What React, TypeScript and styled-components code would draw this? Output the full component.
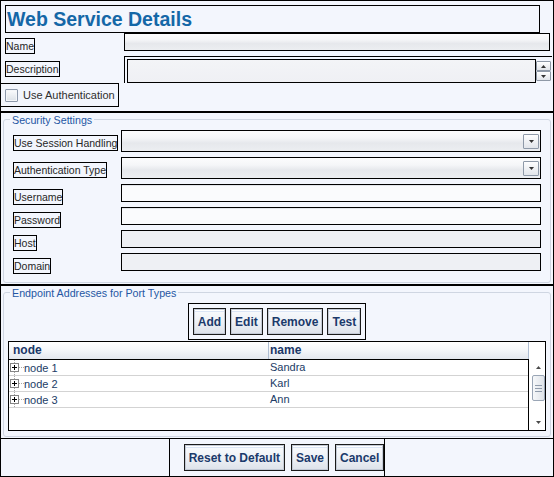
import React from 'react';
import styled, { createGlobalStyle } from 'styled-components';

const FONT = '"Liberation Sans", Arial, sans-serif';

const GlobalStyle = createGlobalStyle`
  html, body { margin: 0; padding: 0; background: #ffffff; }
  body { font-family: ${FONT}; }
  *, *::before, *::after { box-sizing: border-box; }
`;

const Page = styled.div`
  width: 554px;
  height: 477px;
  border: 1px solid #000;
  background: #f3f6fd;
  display: flex;
  flex-direction: column;
  overflow: hidden;
  color: #2a2a2a;
  font-family: ${FONT};
`;

const HeaderSection = styled.section`
  display: flex;
  flex-direction: column;
  align-items: flex-start;
  padding: 4px 0 4px 4px;
  border-bottom: 1px solid #000;
`;

const TitleBox = styled.h1`
  margin: 0;
  width: 535px;
  height: 28px;
  border: 1px solid #000;
  padding-left: 1px;
  font-family: ${FONT};
  font-weight: bold;
  font-size: 19.5px;
  line-height: 26px;
  color: #1467a7;
`;

const Row = styled.div<{ $h: number; $mt?: number }>`
  display: flex;
  align-items: flex-start;
  height: ${(p) => p.$h}px;
  margin-top: ${(p) => p.$mt ?? 0}px;
`;

const LabelCell = styled.div<{ $w: number }>`
  width: ${(p) => p.$w}px;
  flex: none;
`;

const Label = styled.span`
  display: inline-block;
  margin-top: 5px;
  border: 1px solid #000;
  font-size: 10.5px;
  line-height: 14px;
  color: #262626;
  white-space: nowrap;
`;

type Tone = 'gloss' | 'white' | 'gray';
const toneBg: Record<Tone, string> = {
  gloss: 'linear-gradient(to bottom, #fcfcfd 0%, #f5f6f8 35%, #e6e8ec 60%, #eceef1 100%)',
  white: '#fafbfd',
  gray: '#eef0f4',
};

const Field = styled.input<{ $w: number; $h: number; $tone: Tone }>`
  display: block;
  width: ${(p) => p.$w}px;
  height: ${(p) => p.$h}px;
  margin: 0;
  padding: 0 3px;
  border: 1px solid #000;
  border-radius: 0;
  outline: none;
  background: ${(p) => toneBg[p.$tone]};
  box-shadow: ${(p) => (p.$tone === 'white' ? 'inset 0 1px 0 #e2e5ea' : 'none')};
  font-family: ${FONT};
  font-size: 11px;
`;

const DescFrame = styled.div`
  width: 428px;
  height: 27px;
  display: flex;
  border-top: 1px solid #000;
  border-left: 1px solid #000;
  padding: 2px 1px 0 2px;
`;

const DescArea = styled.textarea`
  flex: 1;
  height: 24px;
  margin: 0;
  padding: 0;
  resize: none;
  border: 1px solid #000;
  border-radius: 0;
  outline: none;
  background: linear-gradient(to bottom, #f3f4f7, #eff0f4);
`;

const Spinner = styled.div`
  width: 15px;
  margin-top: 2px;
  display: flex;
  flex-direction: column;
`;

const SpinBtn = styled.div`
  width: 15px;
  height: 10px;
  border: 1px solid #8e98a6;
  border-radius: 1px;
  background: linear-gradient(to bottom, #ffffff, #e1e4e9);
  display: flex;
  align-items: center;
  justify-content: center;
`;

const Tri = ({ up, color = '#333' }: { up?: boolean; color?: string }) => (
  <svg width="5" height="3" viewBox="0 0 5 3">
    <path d={up ? 'M0 3 L2.5 0 L5 3 Z' : 'M0 0 L5 0 L2.5 3 Z'} fill={color} />
  </svg>
);

const AuthBox = styled.label`
  margin-left: -5px;
  width: 119px;
  height: 24px;
  border: 1px solid #000;
  padding-left: 4px;
  display: flex;
  align-items: center;
  gap: 5px;
`;

const CheckBox = styled.span`
  width: 13px;
  height: 13px;
  flex: none;
  border: 1px solid #8d99ab;
  border-radius: 1px;
  background: linear-gradient(to bottom, #fbfcfd, #dce1e8);
  box-shadow: inset 0 0 0 1px #f4f6f9;
`;

const AuthText = styled.span`
  font-size: 11px;
  line-height: 14px;
  color: #2e2e2e;
  white-space: nowrap;
`;

const Section = styled.section<{ $top?: boolean; $bottom?: boolean }>`
  border-top: ${(p) => (p.$top ? '1px solid #000' : 'none')};
  border-bottom: ${(p) => (p.$bottom ? '1px solid #000' : 'none')};
  padding: 0 2px 1px 2px;
`;

const Fieldset = styled.fieldset<{ $pad: string }>`
  margin: 0;
  min-width: 0;
  padding: ${(p) => p.$pad};
  border: 1px solid #cfd6e2;
  border-radius: 3px;
`;

const Legend = styled.legend<{ $ml: number }>`
  margin-left: ${(p) => p.$ml}px;
  padding: 2px 2px 0 2px;
  font-size: 10.7px;
  line-height: 11px;
  color: #2556a3;
  white-space: nowrap;
`;

const Stack = styled.div<{ $gap: number; $center?: boolean }>`
  display: flex;
  flex-direction: column;
  gap: ${(p) => p.$gap}px;
  align-items: ${(p) => (p.$center ? 'center' : 'stretch')};
`;

const SelectBox = styled.div<{ $w: number }>`
  width: ${(p) => p.$w}px;
  height: 22px;
  border: 1px solid #000;
  background: ${toneBg.gloss};
  display: flex;
  align-items: center;
  justify-content: flex-end;
  padding-right: 1px;
`;

const DropBtn = styled.div`
  width: 16px;
  height: 15px;
  border: 1px solid #8e99a8;
  border-radius: 1px;
  background: linear-gradient(to bottom, #fdfdfe, #e2e5ea);
  display: flex;
  align-items: center;
  justify-content: center;
`;

const ButtonGroup = styled.div<{ $gap: number; $pad: string; $full?: boolean }>`
  display: flex;
  gap: ${(p) => p.$gap}px;
  padding: ${(p) => p.$pad};
  border: 1px solid #000;
  ${(p) => (p.$full ? 'border-top: none; border-bottom: none; height: 100%;' : '')}
  align-items: flex-start;
`;

const Btn = styled.button`
  height: 27px;
  margin: 0;
  padding: 0 4px;
  border: 1px solid #1a1a1a;
  border-radius: 0;
  background: linear-gradient(
    to bottom,
    #ffffff 0px,
    #ffffff 2px,
    #dbe5f5 2px,
    #dbe5f5 3px,
    #f7f9fc 3px,
    #eef1f6 50%,
    #dde2ea 100%
  );
  box-shadow: inset 0 0 0 1px #c3cad6;
  font-family: ${FONT};
  font-weight: bold;
  font-size: 12px;
  color: #1b3a6b;
  white-space: nowrap;
  cursor: pointer;
`;

const ButtonBar = styled.div`
  flex: 1;
  display: flex;
  justify-content: center;
`;

const Table = styled.div`
  margin-top: 1px;
  align-self: stretch;
  height: 90px;
  border: 1px solid #000;
  background: #ffffff;
  display: grid;
  grid-template-columns: 1fr 16px;
  grid-template-rows: 17px 1fr;
`;

const HeadRow = styled.div`
  display: grid;
  grid-template-columns: 260px 1fr;
  background: linear-gradient(to bottom, #ffffff 0%, #f5f7fa 45%, #e3e7ee 100%);
`;

const HeadCell = styled.div<{ $pl: number }>`
  border-right: 1px solid #aebdd2;
  padding-left: ${(p) => p.$pl}px;
  font-weight: bold;
  font-size: 12px;
  line-height: 17px;
  color: #1a3768;
`;

const HeadSpacer = styled.div`
  background: #ffffff;
`;

const Body = styled.div`
  border-top: 1px solid #000;
  border-right: 1px solid #000;
  overflow: hidden;
`;

const BodyRow = styled.div`
  display: grid;
  grid-template-columns: 260px 1fr;
  height: 16px;
  border-bottom: 1px solid #d3d3d3;
  font-size: 11px;
  line-height: 15px;
  color: #213c66;
`;

const NodeCell = styled.div`
  display: flex;
  align-items: center;
  padding-left: 1px;
  white-space: nowrap;
`;

const NameCell = styled.div`
  padding-left: 1px;
  white-space: nowrap;
`;

const ScrollBar = styled.div`
  display: flex;
  flex-direction: column;
  align-items: center;
  background: #ffffff;
`;

const ArrowZone = styled.div`
  height: 16px;
  width: 16px;
  display: flex;
  align-items: center;
  justify-content: center;
  padding-left: 2px;
`;

const Thumb = styled.div`
  width: 13px;
  height: 26px;
  margin-left: 2px;
  border: 1px solid #9aa6b6;
  border-radius: 2px;
  background: linear-gradient(to right, #f6f8fa, #dfe3e9);
  display: flex;
  flex-direction: column;
  align-items: center;
  justify-content: center;
  gap: 2px;
`;

const Grip = styled.span`
  width: 7px;
  height: 1px;
  background: #8f9bab;
`;

const Spacer = styled.div`
  flex: 1;
`;

const TreeIcon = () => (
  <svg width="14" height="16" viewBox="0 0 14 16" style={{ flex: 'none' }}>
    <line x1="4.5" y1="0" x2="4.5" y2="16" stroke="#a8a8a8" strokeDasharray="1 1" />
    <rect x="0.5" y="3.5" width="8" height="8" fill="#ffffff" stroke="#858585" />
    <path d="M2 7.5h5M4.5 5v5" stroke="#000" />
    <line x1="9" y1="7.5" x2="14" y2="7.5" stroke="#a8a8a8" strokeDasharray="1 1" />
  </svg>
);

const rows = [
  { node: 'node 1', name: 'Sandra' },
  { node: 'node 2', name: 'Karl' },
  { node: 'node 3', name: 'Ann' },
];

const securityFields: { label: string; kind: 'select' | Tone }[] = [
  { label: 'Use Session Handling', kind: 'select' },
  { label: 'Authentication Type', kind: 'select' },
  { label: 'Username', kind: 'white' },
  { label: 'Password', kind: 'white' },
  { label: 'Host', kind: 'gray' },
  { label: 'Domain', kind: 'gray' },
];

export default function App() {
  return (
    <>
      <GlobalStyle />
      <Page>
        <HeaderSection>
          <TitleBox>Web Service Details</TitleBox>
          <Row $h={18}>
            <LabelCell $w={119}>
              <Label>Name</Label>
            </LabelCell>
            <Field readOnly $w={426} $h={18} $tone="gloss" />
          </Row>
          <Row $h={27} $mt={5}>
            <LabelCell $w={119}>
              <Label>Description</Label>
            </LabelCell>
            <DescFrame>
              <DescArea readOnly />
              <Spinner>
                <SpinBtn>
                  <Tri up />
                </SpinBtn>
                <SpinBtn>
                  <Tri />
                </SpinBtn>
              </Spinner>
            </DescFrame>
          </Row>
          <AuthBox>
            <CheckBox />
            <AuthText>Use Authentication</AuthText>
          </AuthBox>
        </HeaderSection>

        <Section $top $bottom>
          <Fieldset $pad="4px 9px 11px 9px">
            <Legend $ml={-3}>Security Settings</Legend>
            <Stack $gap={5}>
              {securityFields.map((f) => (
                <Row key={f.label} $h={f.kind === 'select' ? 22 : 18}>
                  <LabelCell $w={108}>
                    <Label>{f.label}</Label>
                  </LabelCell>
                  {f.kind === 'select' ? (
                    <SelectBox $w={420}>
                      <DropBtn>
                        <Tri />
                      </DropBtn>
                    </SelectBox>
                  ) : (
                    <Field
                      readOnly
                      type={f.label === 'Password' ? 'password' : 'text'}
                      $w={420}
                      $h={18}
                      $tone={f.kind}
                    />
                  )}
                </Row>
              ))}
            </Stack>
          </Fieldset>
        </Section>

        <Section $top $bottom>
          <Fieldset $pad="4px 4px 5px 4px">
            <Legend $ml={2}>Endpoint Addresses for Port Types</Legend>
            <Stack $gap={0} $center>
              <ButtonGroup $gap={4} $pad="4px 4px 4px 4px">
                <Btn>Add</Btn>
                <Btn>Edit</Btn>
                <Btn>Remove</Btn>
                <Btn>Test</Btn>
              </ButtonGroup>
              <Table>
                <HeadRow>
                  <HeadCell $pl={4}>node</HeadCell>
                  <HeadCell $pl={1}>name</HeadCell>
                </HeadRow>
                <HeadSpacer />
                <Body>
                  {rows.map((r) => (
                    <BodyRow key={r.node}>
                      <NodeCell>
                        <TreeIcon />
                        {r.node}
                      </NodeCell>
                      <NameCell>{r.name}</NameCell>
                    </BodyRow>
                  ))}
                </Body>
                <ScrollBar>
                  <ArrowZone>
                    <Tri up color="#4a4a4a" />
                  </ArrowZone>
                  <Thumb>
                    <Grip />
                    <Grip />
                    <Grip />
                  </Thumb>
                  <Spacer />
                  <ArrowZone>
                    <Tri color="#4a4a4a" />
                  </ArrowZone>
                </ScrollBar>
              </Table>
            </Stack>
          </Fieldset>
        </Section>

        <ButtonBar>
          <ButtonGroup $gap={6} $pad="5px 0 0 14px" $full>
            <Btn>Reset to Default</Btn>
            <Btn>Save</Btn>
            <Btn>Cancel</Btn>
          </ButtonGroup>
        </ButtonBar>
      </Page>
    </>
  );
}
